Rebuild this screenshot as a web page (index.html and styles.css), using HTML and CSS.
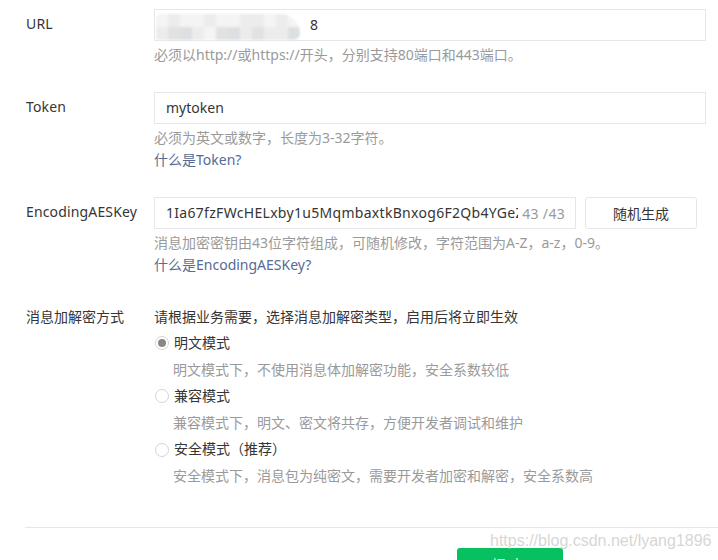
FILE: index.html
```html
<!DOCTYPE html>
<html lang="zh-CN">
<head>
<meta charset="utf-8">
<title>服务器配置</title>
<link rel="stylesheet" href="styles.css">
</head>
<body>
<div class="page">
  <form class="form">
    <div class="row row-url">
      <label class="label">URL</label>
      <div class="field">
        <div class="input">
          <span class="mosaic" aria-hidden="true">
            <i class="t4"></i><i class="t1"></i><i class="t4"></i><i class="t4"></i><i class="t1"></i><i class="t4"></i><i class="t4"></i><i class="t1"></i><i class="t1"></i><i class="t4"></i><i class="t1"></i><i class="t4"></i>
            <i class="t1"></i><i class="t2"></i><i class="t3"></i><i class="t1"></i><i class="t4"></i><i class="t2"></i><i class="t3"></i><i class="t1"></i><i class="t2"></i><i class="t1"></i><i class="t1"></i><i class="t3"></i>
          </span><span class="val">8</span>
        </div>
        <p class="hint">必须以http://或https://开头，分别支持80端口和443端口。</p>
      </div>
    </div>

    <div class="row">
      <label class="label">Token</label>
      <div class="field">
        <div class="input"><span class="val">mytoken</span></div>
        <p class="hint">必须为英文或数字，长度为3-32字符。</p>
        <a class="link">什么是Token?</a>
      </div>
    </div>

    <div class="row">
      <label class="label">EncodingAESKey</label>
      <div class="field">
        <div class="key-line">
          <div class="input input-key">
            <span class="val key-val">1Ia67fzFWcHELxby1u5MqmbaxtkBnxog6F2Qb4YGeZ</span>
            <span class="counter">43 /43</span>
          </div>
          <button type="button" class="btn">随机生成</button>
        </div>
        <p class="hint">消息加密密钥由43位字符组成，可随机修改，字符范围为A-Z，a-z，0-9。</p>
        <a class="link">什么是EncodingAESKey?</a>
      </div>
    </div>

    <div class="row row-mode">
      <label class="label label-plain">消息加解密方式</label>
      <div class="field">
        <p class="mode-title">请根据业务需要，选择消息加解密类型，启用后将立即生效</p>
        <div class="option">
          <span class="radio checked"></span><span>明文模式</span>
        </div>
        <p class="option-desc">明文模式下，不使用消息体加解密功能，安全系数较低</p>
        <div class="option">
          <span class="radio"></span><span>兼容模式</span>
        </div>
        <p class="option-desc">兼容模式下，明文、密文将共存，方便开发者调试和维护</p>
        <div class="option">
          <span class="radio"></span><span>安全模式（推荐）</span>
        </div>
        <p class="option-desc">安全模式下，消息包为纯密文，需要开发者加密和解密，安全系数高</p>
      </div>
    </div>

    <div class="divider"></div>
    <div class="actions">
      <button type="button" class="btn-primary">提交</button>
    </div>
  </form>
  <div class="watermark">https://blog.csdn.net/lyang1896</div>
</div>
</body>
</html>
```

FILE: styles.css
```css
html, body {
  margin: 0;
  padding: 0;
  background: #ffffff;
  overflow: hidden;
}

body {
  font-family: "Noto Sans", "Noto Sans CJK SC", sans-serif;
  font-size: 14px;
  color: #353535;
}

.page {
  position: relative;
  width: 718px;
  height: 560px;
  overflow: hidden;
}

.form {
  display: flex;
  flex-direction: column;
  padding-top: 9px;
}

.row {
  display: flex;
  padding-left: 26px;
  padding-right: 12px;
  margin-bottom: 26px;
}

.label {
  width: 128px;
  flex: none;
  line-height: 30px;
  color: #353535;
  letter-spacing: 0.15px;
}

.label-plain {
  line-height: 26px;
  letter-spacing: 0;
}

.field {
  flex: 1;
  display: flex;
  flex-direction: column;
  align-items: flex-start;
}

.input {
  box-sizing: border-box;
  width: 100%;
  height: 32px;
  border: 1px solid #e7e7eb;
  display: flex;
  align-items: center;
  padding: 0 11px;
  color: #353535;
  overflow: visible;
}

.val {
  white-space: nowrap;
  line-height: 30px;
}

.mosaic {
  display: flex;
  flex-wrap: wrap;
  width: 144px;
  height: 26px;
  margin-left: -10px;
  margin-right: 10px;
  margin-top: 4px;
  filter: blur(1.2px);
  border-radius: 10px 40px 14px 6px;
  overflow: hidden;
}

.mosaic i {
  display: block;
  width: 12px;
  height: 13px;
}

.mosaic i.t1 { background: #ececec; }
.mosaic i.t2 { background: #e4e2e1; }
.mosaic i.t3 { background: #dde0e3; }
.mosaic i.t4 { background: #f4f4f4; }

.hint {
  margin: 3px 0 0;
  line-height: 22px;
  color: #9a9a9a;
  white-space: nowrap;
}

.link {
  line-height: 22px;
  color: #576b95;
  cursor: pointer;
}

.key-line {
  display: flex;
  width: 100%;
  gap: 9px;
}

.input-key {
  width: 422px;
  flex: none;
  padding-right: 10px;
  overflow: hidden;
}

.key-val {
  flex: 1;
  overflow: hidden;
  min-width: 0;
  letter-spacing: 0.3px;
}

.counter {
  flex: none;
  color: #9a9a9a;
  margin-left: 4px;
  letter-spacing: 0.3px;
}

.btn {
  box-sizing: border-box;
  width: 112px;
  height: 32px;
  border: 1px solid #e4e8eb;
  border-radius: 3px;
  background: #ffffff;
  font-family: inherit;
  font-size: 14px;
  color: #353535;
  padding: 0;
}

.row-mode {
  margin-top: 2px;
  margin-bottom: 0;
}

.mode-title {
  margin: 0;
  line-height: 26px;
  color: #353535;
}

.option {
  display: flex;
  align-items: center;
  height: 26.6px;
  line-height: 26.6px;
  color: #353535;
}

.radio {
  box-sizing: border-box;
  width: 14px;
  height: 14px;
  border: 1px solid #d5d5d5;
  border-radius: 50%;
  margin-left: 1px;
  margin-right: 5px;
  display: flex;
  align-items: center;
  justify-content: center;
  background: #fff;
}

.radio.checked::after {
  content: "";
  width: 8px;
  height: 8px;
  border-radius: 50%;
  background: #888888;
}

.option-desc {
  margin: 0;
  padding-left: 19px;
  line-height: 26.6px;
  color: #9a9a9a;
}

.divider {
  margin-top: 37px;
  margin-left: 25px;
  height: 1px;
  background: #e7e7eb;
}

.actions {
  display: flex;
  padding-left: 457px;
  padding-top: 20px;
}

.btn-primary {
  width: 106px;
  height: 32px;
  border: none;
  border-radius: 3px;
  background: #07c160;
  color: #ffffff;
  font-family: inherit;
  font-size: 14px;
  letter-spacing: 4px;
  padding: 0;
}

.watermark {
  position: absolute;
  left: 490px;
  top: 530px;
  font-family: "Liberation Sans", Arial, sans-serif;
  font-size: 16px;
  line-height: 22px;
  color: rgba(200, 200, 200, 0.75);
  white-space: nowrap;
  pointer-events: none;
}
```
